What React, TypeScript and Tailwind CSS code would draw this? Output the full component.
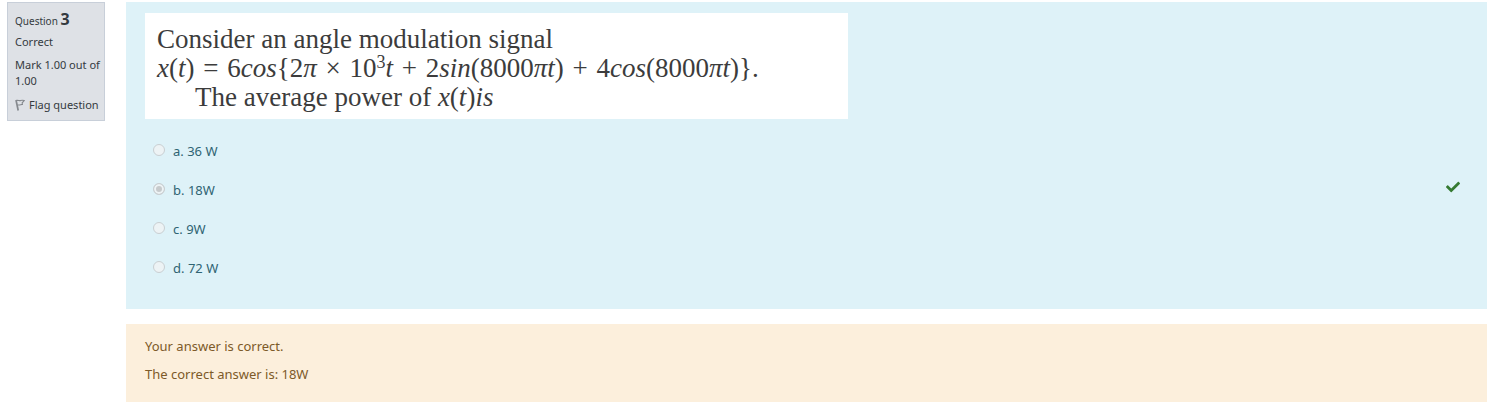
import React from "react";
import { FaCheck } from "react-icons/fa";

type Option = { letter: string; text: string };

const options: Option[] = [
  { letter: "a", text: "36 W" },
  { letter: "b", text: "18W" },
  { letter: "c", text: "9W" },
  { letter: "d", text: "72 W" },
];

const correct = "b";

function FlagIcon() {
  return (
    <svg viewBox="0 0 10 12" className="h-3 w-[10px] shrink-0" fill="none" stroke="#85898e" aria-hidden="true">
      <path d="M1 1 L3.2 11.5" strokeWidth="1.7" />
      <path d="M1.3 1.6 C3 .8 4.2 2 5.6 1.6 C6.8 1.2 7.8 1.2 9.2 1.6 L7.2 3.8 L7.4 5.4 C6 5.2 5 6.4 2.6 6" strokeWidth="1.1" />
    </svg>
  );
}

function QuestionInfo() {
  return (
    <aside className="w-[98px] shrink-0 border border-[#c8cfd9] bg-[#dee1e6] px-[7px] pt-2 pb-[7px] text-[11px] leading-4 text-[#343a40]">
      <h2 className="text-[10px] leading-4 whitespace-nowrap">
        Question <span className="text-base leading-4 font-bold">3</span>
      </h2>
      <div className="mt-[5px]">Correct</div>
      <div className="mt-[7px] whitespace-nowrap">
        Mark 1.00 out of
        <br />
        1.00
      </div>
      <a href="#flag" className="mt-2 flex items-center gap-1 whitespace-nowrap">
        <FlagIcon />
        Flag question
      </a>
    </aside>
  );
}

function Op({ children }: { children: string }) {
  return <span className="mx-[2px]">{children}</span>;
}

function Formula() {
  return (
    <div className="w-full max-w-[703px] bg-white pt-3 pb-[7px] pl-3 font-['Liberation_Serif',serif] text-[27px] leading-[29px] whitespace-nowrap text-[#3c3c3c]">
      <p>Consider an angle modulation signal</p>
      <p>
        <i>x</i>(<i>t</i>) <Op>=</Op> 6<i>cos</i>&#123;2<i>π</i> <Op>×</Op> 10
        <sup className="text-lg leading-none">3</sup>
        <i>t</i> <Op>+</Op> 2<i>sin</i>(8000<i>πt</i>) <Op>+</Op> 4<i>cos</i>(8000<i>πt</i>)&#125;.
      </p>
      <p className="pl-[38px]">
        The average power of <i>x</i>(<i>t</i>)<i>is</i>
      </p>
    </div>
  );
}

export default function App() {
  return (
    <div className="flex items-start gap-[21px] bg-white pt-[2px] pr-4 pl-[7px] font-['Noto_Sans',sans-serif]">
      <QuestionInfo />
      <main className="min-w-0 flex-1 text-[13px] leading-5">
        <section className="bg-[#def2f8] px-[19px] pt-[11px] pb-[31px] text-[#2f6473]">
          <Formula />
          <fieldset className="mt-[22px] flex flex-col gap-[19px]">
            {options.map(({ letter, text }) => (
              <div key={letter} className="flex items-center">
                <input
                  id={letter}
                  type="radio"
                  name="answer"
                  disabled
                  defaultChecked={letter === correct}
                  className="mr-2 mb-[2px] ml-2 size-3 appearance-none rounded-full border border-[#c9cfd2] bg-[#edf3f5] checked:bg-[#c6cacc] checked:shadow-[inset_0_0_0_2px_#edf3f5]"
                />
                <label htmlFor={letter}>
                  {letter}. {text}
                </label>
                {letter === correct && (
                  <FaCheck className="mr-2 mb-[6px] ml-auto size-[14px] text-[#357a32]" aria-label="Correct" />
                )}
              </div>
            ))}
          </fieldset>
        </section>
        <section className="mt-[15px] bg-[#fcefdc] px-[19px] pt-3 pb-[18px] text-[#7d5a29]">
          <p>Your answer is correct.</p>
          <p className="mt-2">The correct answer is: 18W</p>
        </section>
      </main>
    </div>
  );
}
